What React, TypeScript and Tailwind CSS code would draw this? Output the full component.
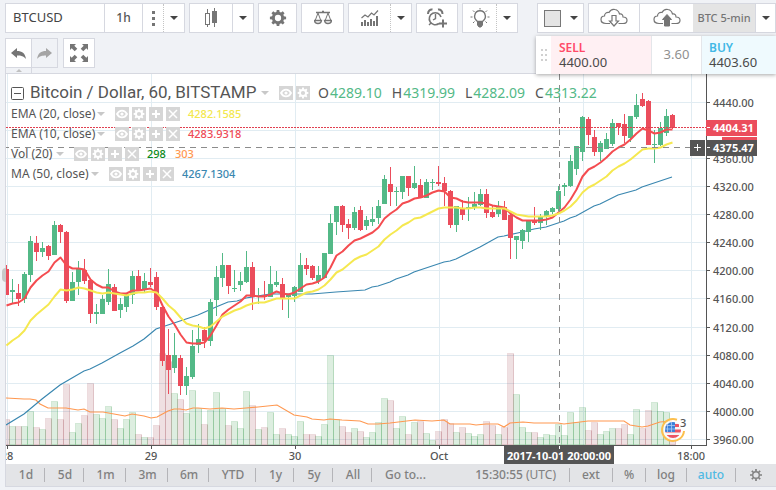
import type { ReactNode } from "react";

type Candle = [high: number, top: number, bottom: number, low: number, up: 0 | 1, volume: number];

// one row per hour: wick and body in chart pixels, direction, volume bar height
const CANDLES: Candle[] = [
  [265, 269, 295, 295, 0, 25], [279, 290, 292, 303, 1, 18], [284, 293, 299, 306, 0, 18],
  [272, 274, 299, 303, 1, 18], [236, 241, 275, 282, 1, 33], [236, 243, 252, 261, 0, 17],
  [242, 248, 252, 257, 1, 15], [245, 246, 256, 260, 0, 26], [221, 225, 255, 255, 1, 43],
  [224, 225, 232, 243, 0, 25], [231, 232, 301, 303, 0, 60], [272, 282, 301, 301, 1, 12],
  [261, 269, 282, 295, 1, 21], [259, 270, 281, 284, 0, 29], [280, 280, 314, 323, 0, 61],
  [304, 312, 314, 324, 1, 30], [295, 299, 314, 314, 1, 26], [269, 284, 302, 305, 1, 38],
  [284, 287, 311, 311, 0, 25], [298, 304, 310, 318, 1, 16], [293, 294, 307, 312, 1, 25],
  [271, 276, 295, 304, 1, 32], [270, 276, 290, 291, 0, 10], [273, 281, 290, 292, 1, 7],
  [268, 282, 285, 287, 0, 7], [272, 277, 307, 310, 0, 19], [304, 307, 361, 366, 0, 91],
  [329, 355, 370, 394, 0, 83], [333, 355, 368, 373, 1, 51], [355, 358, 386, 395, 0, 45],
  [367, 376, 386, 395, 1, 31], [330, 346, 377, 379, 1, 54], [324, 339, 345, 353, 1, 36],
  [327, 330, 341, 348, 0, 20], [299, 302, 341, 346, 1, 34], [266, 277, 300, 316, 1, 52],
  [253, 265, 278, 287, 1, 36], [265, 265, 286, 294, 0, 19], [270, 288, 289, 292, 1, 23],
  [272, 281, 285, 291, 1, 16], [251, 267, 282, 283, 1, 53], [262, 267, 297, 310, 0, 39],
  [288, 296, 297, 304, 1, 15], [281, 295, 297, 300, 0, 17], [266, 284, 297, 297, 1, 32],
  [271, 282, 285, 287, 1, 10], [278, 284, 299, 310, 0, 16], [294, 295, 297, 318, 1, 10],
  [286, 287, 296, 302, 1, 8], [253, 265, 292, 292, 1, 23], [258, 265, 269, 275, 0, 10],
  [265, 266, 278, 280, 0, 10], [266, 275, 281, 284, 1, 8], [253, 253, 278, 278, 1, 20],
  [214, 223, 254, 254, 1, 89], [206, 206, 222, 235, 1, 25], [205, 206, 225, 232, 0, 18],
  [219, 224, 228, 239, 0, 12], [207, 212, 228, 230, 1, 16], [206, 210, 230, 231, 0, 13],
  [216, 220, 226, 230, 1, 7], [207, 219, 222, 226, 1, 12], [200, 206, 218, 224, 1, 22],
  [175, 179, 204, 204, 1, 46], [167, 184, 192, 206, 0, 44], [187, 191, 192, 206, 1, 16],
  [176, 176, 192, 199, 1, 28], [176, 176, 188, 196, 0, 10], [166, 183, 188, 189, 1, 22],
  [179, 185, 198, 198, 0, 23], [179, 182, 198, 198, 1, 11], [179, 182, 183, 190, 1, 4],
  [166, 182, 184, 186, 0, 13], [177, 183, 191, 206, 0, 25], [190, 191, 225, 228, 0, 21],
  [206, 206, 225, 232, 1, 12], [200, 209, 215, 220, 0, 17], [197, 207, 208, 221, 1, 11],
  [192, 204, 208, 210, 1, 8], [189, 194, 205, 206, 1, 10], [189, 194, 213, 218, 0, 23],
  [206, 212, 217, 218, 0, 19], [201, 207, 214, 217, 1, 10], [201, 207, 220, 220, 0, 17],
  [214, 215, 238, 259, 0, 91], [236, 236, 240, 259, 1, 50], [229, 230, 241, 249, 1, 17],
  [221, 221, 232, 242, 1, 12], [207, 220, 223, 225, 0, 12], [214, 217, 223, 230, 1, 7],
  [210, 211, 216, 225, 1, 10], [207, 208, 212, 214, 1, 9], [186, 191, 209, 211, 1, 20],
  [183, 185, 187, 196, 1, 9], [155, 161, 186, 187, 1, 32], [146, 146, 169, 175, 1, 22],
  [116, 117, 152, 161, 1, 37], [117, 119, 135, 145, 0, 14], [130, 137, 152, 156, 0, 22],
  [141, 143, 152, 161, 1, 10], [133, 139, 149, 149, 1, 13], [119, 123, 144, 146, 1, 16],
  [123, 123, 127, 135, 0, 16], [114, 124, 136, 143, 0, 20], [116, 116, 138, 142, 1, 10],
  [94, 105, 117, 119, 1, 35], [93, 99, 106, 107, 0, 16], [100, 101, 145, 145, 0, 34],
  [130, 144, 145, 163, 1, 42], [122, 128, 145, 146, 1, 33], [109, 116, 133, 136, 1, 32],
  [114, 115, 128, 129, 0, 21],
];

const EMA10 = [
  305, 303, 302, 298, 287, 280, 275, 271, 262, 257, 265, 268, 268, 269, 279, 284, 287, 287, 291, 293,
  293, 290, 290, 289, 288, 292, 305, 316, 324, 334, 342, 343, 343, 342, 335, 325, 314, 309, 305, 301,
  295, 295, 296, 296, 294, 291, 293, 294, 292, 288, 284, 283, 281, 277, 267, 255, 251, 245, 240, 238,
  235, 232, 227, 218, 213, 209, 203, 201, 198, 197, 195, 192, 190, 191, 197, 198, 201, 202, 202, 202,
  203, 205, 206, 207, 213, 217, 220, 220, 220, 220, 219, 217, 212, 207, 199, 189, 176, 169, 166, 162,
  157, 151, 147, 144, 139, 133, 128, 130, 133, 132, 129, 129,
];

const EMA20 = [
  345, 340, 336, 330, 320, 314, 309, 304, 296, 289, 290, 289, 287, 288, 290, 292, 293, 292, 293, 294,
  295, 293, 292, 292, 291, 292, 298, 305, 310, 317, 323, 325, 326, 328, 326, 321, 316, 313, 310, 308,
  305, 303, 302, 302, 300, 298, 298, 298, 298, 295, 292, 291, 289, 285, 279, 272, 269, 264, 259, 256,
  254, 250, 246, 239, 234, 230, 225, 222, 218, 217, 214, 211, 208, 207, 207, 207, 208, 208, 207, 207,
  208, 208, 208, 208, 211, 214, 215, 216, 216, 216, 216, 215, 213, 210, 206, 200, 192, 187, 184, 180,
  176, 170, 166, 163, 159, 154, 149, 148, 148, 147, 144, 142,
];

const MA50 =
  "6,425 24,414 42,399 60,385 72,378 84,371 90,369 102,363 120,353 133,346 144,339 156,329 168,325 174,323 186,319 198,315 216,307 228,302 237,301 246,298 270,294 312,294 336,292 365,290 372,287 378,286 390,282 396,279 408,275 414,272 444,262 450,261 456,259 474,250 480,247 498,237 504,236 522,232 534,229 546,227 564,221 570,218 576,216 594,206 600,204 618,195 636,190 642,187 648,185 672,177";

const VOLUME_MA =
  "6,398 24,399 30,399 36,400 40,404 48,408 66,408 78,410 84,409 90,412 103,412 125,416 132,414 144,416 151,418 157,417 168,411 174,409 180,409 186,410 193,408 198,408 210,409 222,408 234,409 246,408 258,407 277,405 294,415 307,417 312,419 324,420 330,419 342,420 360,421 368,424 378,424 390,423 415,420 432,421 444,420 450,424 470,424 476,425 486,424 498,424 504,427 510,423 523,422 534,423 558,423 564,424 588,421 624,421 630,425 642,427 648,426 660,422 672,421";

const PRICE_LABELS = [
  { label: "4440.00", y: 102 },
  { label: "", y: 130 },
  { label: "4360.00", y: 158 },
  { label: "4320.00", y: 186 },
  { label: "4280.00", y: 214 },
  { label: "4240.00", y: 242 },
  { label: "4200.00", y: 270 },
  { label: "4160.00", y: 298 },
  { label: "4120.00", y: 327 },
  { label: "4080.00", y: 355 },
  { label: "4040.00", y: 383 },
  { label: "4000.00", y: 411 },
  { label: "3960.00", y: 439 },
];

const TIME_LABELS = [
  { label: "28", x: 7 },
  { label: "29", x: 151 },
  { label: "30", x: 295 },
  { label: "Oct", x: 439 },
  { label: "", x: 583 },
  { label: "18:00", x: 691 },
];

const candleX = (i: number) => 6 + i * 6;
const toPoints = (ys: number[]) => ys.map((y, i) => `${candleX(i) + 0.5},${y + 0.5}`).join(" ");

const GEAR =
  "M8.6 1h2.8l.4 2.3 1.6.7 1.9-1.4 2 2-1.4 1.9.7 1.6 2.4.5v2.8l-2.4.4-.7 1.6 1.4 1.9-2 2-1.9-1.4-1.6.7-.4 2.4H8.6l-.4-2.4-1.6-.7-1.9 1.4-2-2 1.4-1.9-.7-1.6L1 11.4V8.6l2.4-.5.7-1.6-1.4-1.9 2-2 1.9 1.4 1.6-.7zM10 6.500a3.5 3.5 0 1 0 0 7 3.5 3.5 0 1 0 0-7z";

function GearIcon({ className }: { className: string }) {
  return (
    <svg viewBox="0 0 20 20" className={className} fill="currentColor" fillRule="evenodd">
      <path d={GEAR} />
    </svg>
  );
}

function Caret() {
  return (
    <svg viewBox="0 0 8 4" className="w-2 h-1" fill="currentColor">
      <path d="M0 0h8L4 4z" />
    </svg>
  );
}

function Group({ children, className = "" }: { children: ReactNode; className?: string }) {
  return (
    <div className={`flex h-[30px] shrink-0 border border-[#d6d8e0] bg-white text-[#757575] ${className}`}>
      {children}
    </div>
  );
}

function ToolButton({ label, children, className }: { label: string; children: ReactNode; className: string }) {
  return (
    <button type="button" aria-label={label} className={`flex items-center justify-center shrink-0 ${className}`}>
      {children}
    </button>
  );
}

function CandlesIcon() {
  return (
    <svg viewBox="0 0 14 20" className="w-3.5 h-5" shapeRendering="crispEdges">
      <path d="M3 1v4M3 16v3M10 0v19" transform="translate(.5)" stroke="currentColor" />
      <rect x="1.5" y="5.5" width="4" height="11" fill="#fff" stroke="currentColor" />
      <rect x="8" y="3" width="5" height="12" fill="currentColor" />
    </svg>
  );
}

function ScalesIcon() {
  return (
    <svg viewBox="0 0 18 16" className="w-[18px] h-4" fill="none" stroke="currentColor">
      <path d="M2 2.5h14M8 1.5h2" strokeWidth="1.3" />
      <path d="M4 3L1 11M4 3l3 8M14 3l-3 8M14 3l3 8" />
      <path d="M.5 10.5h7c-.3 4-6.700 4-7 0zM10.5 10.5h7c-.3 4-6.700 4-7 0z" strokeWidth="1.3" />
    </svg>
  );
}

function IndicatorsIcon() {
  return (
    <svg viewBox="0 0 18 16" className="w-[18px] h-4">
      <path d="M.5 8L4 5l3 2 3.5-4L13 5l4-4.5" fill="none" stroke="currentColor" strokeWidth="1.2" />
      <path
        d="M0 12h2v4H0zM3 10h2v6H3zM6 12h2v4H6zM9 9h2v7H9zM12 11h2v5h-2zM15 6h2v10h-2z"
        fill="currentColor"
      />
    </svg>
  );
}

function AlarmIcon() {
  return (
    <svg viewBox="0 0 20 20" className="w-5 h-5" fill="none" stroke="currentColor">
      <path d="M12 15.5A6 6 0 1 1 14 9" strokeWidth="1.6" />
      <path d="M1 6c0-3 2-5 4.5-4.5M15.5 6c0-3-2-5-4.5-4.5" strokeWidth="2" />
      <path d="M8.5 6v4.5L6 12M4 15l-2 2" strokeWidth="1.4" />
      <path d="M16 11.5v8M12 15.5h8" strokeWidth="2" />
    </svg>
  );
}

function BulbIcon() {
  return (
    <svg viewBox="0 0 20 20" className="w-5 h-5" fill="none" stroke="currentColor">
      <path d="M7.5 13.5C4.5 11 4 9.5 4.8 7A5.3 5.3 0 0 1 15.2 7c.8 2.5.3 4-2.7 6.5z" strokeWidth="1.4" />
      <path d="M7.5 14h5v3L11 19H9l-1.5-2z" fill="currentColor" />
      <path d="M10 0v1.5M3 2.5L4.5 4M17 2.5L15.5 4M.5 9h2M17.5 9h2M3 15l1.5-1.5M17 15l-1.5-1.5" />
    </svg>
  );
}

function CloudIcon({ upload }: { upload?: boolean }) {
  return (
    <svg viewBox="0 0 28 20" className="w-7 h-5" stroke="currentColor" fill="none">
      <path
        d="M10 15.5H6C2.5 15.5 1 13.5 1 11.5 1 9.5 2.5 8 4.5 8 4.5 5.5 6.5 4 9 4.5c1.5-3 4-3.5 6-3 2.5.5 4 2.5 4.5 4.5 2.5-.5 3.5 1 3.5 3 3 0 4 1.5 4 3.2 0 2-1.5 3.3-4 3.3h-4.5"
        strokeWidth="1.2"
      />
      {upload ? (
        <path d="M14 6.5l4.5 5h-2V18h-5v-6.5h-2z" fill="currentColor" />
      ) : (
        <path d="M14 18l4.5-5H16V7.5h-4V13H9.5z" strokeWidth="1.2" />
      )}
    </svg>
  );
}

function UndoIcon({ className }: { className: string }) {
  return (
    <svg viewBox="0 0 15 11" className={className} fill="currentColor">
      <path d="M0 5L6 0v3c5 0 8 2 9 8-2.5-3-5-3.5-9-3.5V10z" />
    </svg>
  );
}

function FullscreenIcon() {
  return (
    <svg viewBox="0 0 18 18" className="w-[18px] h-[18px]" fill="currentColor">
      <path d="M0 0h6L4.3 1.7l3 3-2.6 2.6-3-3L0 6zM18 0v6l-1.7-1.7-3 3-2.6-2.6 3-3L12 0zM0 18v-6l1.7 1.7 3-3 2.6 2.6-3 3L6 18zM18 18h-6l1.7-1.7-3-3 2.6-2.6 3 3L18 12z" />
    </svg>
  );
}

function TopToolbar() {
  return (
    <div className="flex gap-1 pl-[5px] pt-[3px] overflow-hidden">
      <Group>
        <input
          aria-label="Symbol"
          defaultValue="BTCUSD"
          className="w-[99px] pl-[7px] text-[13px] text-[#444] border-r border-[#d6d8e0] outline-none"
        />
        <button type="button" className="w-[38px] text-xs font-medium text-[#555] border-r border-[#d6d8e0]">
          1h
        </button>
        <ToolButton label="Intervals" className="w-[21px] border-r border-dotted border-[#c4c4c4]">
          <svg viewBox="0 0 3 15" className="w-[3px] h-[15px]" fill="currentColor">
            <path d="M0 0h3v3H0zM0 6h3v3H0zM0 12h3v3H0z" />
          </svg>
        </ToolButton>
        <ToolButton label="More intervals" className="w-5 text-[#444]">
          <Caret />
        </ToolButton>
      </Group>
      <Group>
        <ToolButton label="Candles" className="w-[43px] border-r border-[#d6d8e0]">
          <CandlesIcon />
        </ToolButton>
        <ToolButton label="Chart style" className="w-5 text-[#444]">
          <Caret />
        </ToolButton>
      </Group>
      <Group>
        <ToolButton label="Settings" className="w-[37px]">
          <GearIcon className="w-[18px] h-[18px]" />
        </ToolButton>
      </Group>
      <Group>
        <ToolButton label="Compare" className="w-[41px]">
          <ScalesIcon />
        </ToolButton>
      </Group>
      <Group>
        <ToolButton label="Indicators" className="w-[42px] border-r border-dotted border-[#c4c4c4]">
          <IndicatorsIcon />
        </ToolButton>
        <ToolButton label="More indicators" className="w-5 text-[#444]">
          <Caret />
        </ToolButton>
      </Group>
      <Group>
        <ToolButton label="Add alert" className="w-10">
          <AlarmIcon />
        </ToolButton>
      </Group>
      <Group>
        <ToolButton label="Ideas" className="w-[34px] border-r border-dotted border-[#c4c4c4]">
          <BulbIcon />
        </ToolButton>
        <ToolButton label="More ideas" className="w-5 text-[#444]">
          <Caret />
        </ToolButton>
      </Group>
      <Group className="ml-[15px]">
        <button type="button" aria-label="Layout" className="flex items-center gap-[9px] w-[45px] pl-1.5 text-[#444]">
          <span className="w-[17px] h-[17px] border border-[#777] bg-[#e4e4e4]" />
          <Caret />
        </button>
      </Group>
      <Group className="grow">
        <ToolButton label="Load chart" className="w-[51px] border-r border-[#d6d8e0]">
          <CloudIcon />
        </ToolButton>
        <ToolButton label="Save chart" className="w-[53px]">
          <CloudIcon upload />
        </ToolButton>
        <button type="button" className="grow bg-[#e4e4e4] border-r border-[#d6d8e0] text-[11px] font-medium whitespace-nowrap">
          BTC 5-min
        </button>
        <ToolButton label="Saved charts" className="w-[19px] text-[#444]">
          <Caret />
        </ToolButton>
      </Group>
    </div>
  );
}

function HistoryToolbar() {
  return (
    <div className="flex gap-[5px] pl-[5px] pt-[5px]">
      <Group>
        <ToolButton label="Undo" className="w-[26px] border-r border-[#d6d8e0]">
          <UndoIcon className="w-[15px] h-[11px]" />
        </ToolButton>
        <ToolButton label="Redo" className="w-[25px] bg-[#f0f2f6] text-[#a5a5a5]">
          <UndoIcon className="w-[15px] h-[11px] -scale-x-100" />
        </ToolButton>
      </Group>
      <Group>
        <ToolButton label="Fullscreen" className="w-[30px]">
          <FullscreenIcon />
        </ToolButton>
      </Group>
    </div>
  );
}

function OrderPanel() {
  return (
    <div className="absolute right-0 top-9 z-20 flex h-[38px] w-60 bg-white shadow-[0_1px_4px_rgba(0,0,0,0.35)]">
      <div className="flex w-[15px] items-center justify-center text-[#d0d0d0]">
        <svg viewBox="0 0 6 12" className="w-1.5 h-3" fill="currentColor">
          <path d="M0 0h2v2H0zM4 0h2v2H4zM0 5h2v2H0zM4 5h2v2H4zM0 10h2v2H0zM4 10h2v2H4z" />
        </svg>
      </div>
      <button type="button" className="w-[101px] pl-2 text-left bg-[#fff0f3] border-r border-[#e4e6ea]">
        <div className="text-xs font-semibold leading-[15px] text-[#ff4a68]">SELL</div>
        <div className="text-[13px] leading-[15px] text-[#4a4a4a]">4400.00</div>
      </button>
      <div className="flex w-[49px] items-center justify-center text-[13px] text-[#909090]">3.60</div>
      <button type="button" className="grow pl-[7px] text-left bg-[#effafe] border-l border-[#e4e6ea]">
        <div className="text-xs font-semibold leading-[15px] text-[#42b8e6]">BUY</div>
        <div className="text-[13px] leading-[15px] text-[#4a4a4a]">4403.60</div>
      </button>
    </div>
  );
}

function LegendButton({ label, children }: { label: string; children: ReactNode }) {
  return (
    <button type="button" aria-label={label} className="flex w-3.5 h-3.5 items-center justify-center bg-[#d6d6d6] text-white">
      {children}
    </button>
  );
}

function LegendActions({ short }: { short?: boolean }) {
  return (
    <div className="flex gap-[3px]">
      <LegendButton label="Hide">
        <svg viewBox="0 0 12 10" className="w-3 h-2.5" fill="none" stroke="currentColor">
          <path d="M1 5c2.5-4.5 7.5-4.5 10 0-2.5 4.5-7.5 4.5-10 0z" strokeWidth="1.8" />
          <circle cx="6" cy="5" r="1.6" fill="currentColor" stroke="none" />
        </svg>
      </LegendButton>
      <LegendButton label="Format">
        <GearIcon className="w-3 h-3" />
      </LegendButton>
      {!short && (
        <>
          <LegendButton label="Add">
            <svg viewBox="0 0 8 8" className="w-2 h-2" fill="currentColor">
              <path d="M3 0h2v3h3v2H5v3H3V5H0V3h3z" />
            </svg>
          </LegendButton>
          <LegendButton label="Remove">
            <svg viewBox="0 0 10 10" className="w-2.5 h-2.5" stroke="currentColor" strokeWidth="1.5">
              <path d="M1 1l8 8M9 1L1 9" />
            </svg>
          </LegendButton>
        </>
      )}
    </div>
  );
}

function LegendRow({ name, width, children }: { name: string; width: string; children: ReactNode }) {
  return (
    <div className="flex h-5 items-center text-xs text-[#555]">
      <div className={`${width} whitespace-nowrap`}>{name}</div>
      <span className="text-[#c8c8c8]">
        <Caret />
      </span>
      <div className="ml-2.5 mr-2">
        <LegendActions />
      </div>
      <div className="flex gap-[9px] text-[11px] font-medium">{children}</div>
    </div>
  );
}

function Ohlc({ name, value }: { name: string; value: string }) {
  return (
    <div className="flex items-center">
      <span className="text-sm text-[#555]">{name}</span>
      <span className="ml-px text-sm text-[#53b987]">{value}</span>
    </div>
  );
}

function Legend() {
  return (
    <div className="absolute left-[5px] top-2">
      <div className="flex h-[22px] items-center text-[#555]">
        <svg viewBox="0 0 13 13" className="w-[13px] h-[13px] mr-1.5" fill="none" stroke="currentColor">
          <rect x=".5" y=".5" width="12" height="12" rx="1" />
          <path d="M3 6.5h7" />
        </svg>
        <div className="w-[231px] font-[Roboto,sans-serif] text-[17px] whitespace-nowrap">
          Bitcoin / Dollar, 60, BITSTAMP
        </div>
        <span className="text-[#c8c8c8] mr-2.5">
          <Caret />
        </span>
        <LegendActions short />
        <div className="ml-2 flex gap-2.5">
          <Ohlc name="O" value="4289.10" />
          <Ohlc name="H" value="4319.99" />
          <Ohlc name="L" value="4282.09" />
          <Ohlc name="C" value="4313.22" />
        </div>
      </div>
      <LegendRow name="EMA (20, close)" width="w-[86px]">
        <span className="text-[#f3e84e]">4282.1585</span>
      </LegendRow>
      <LegendRow name="EMA (10, close)" width="w-[86px]">
        <span className="text-[#ee4a55]">4283.9318</span>
      </LegendRow>
      <LegendRow name="Vol (20)" width="w-[45px]">
        <span className="text-[#0a8a1a]">298</span>
        <span className="text-[#ff9850]">303</span>
      </LegendRow>
      <LegendRow name="MA (50, close)" width="w-20">
        <span className="text-[#3a87b0]">4267.1304</span>
      </LegendRow>
    </div>
  );
}

function PriceChart() {
  return (
    <svg viewBox="6 74 770 390" className="block w-full h-auto" fontSize="11" fill="#555">
      {/* grid */}
      <g fill="#e1ecf2" shapeRendering="crispEdges">
        {PRICE_LABELS.map(({ y }) => (
          <rect key={y} x="6" y={y} width="700" height="1" />
        ))}
        {TIME_LABELS.map(({ x }) => (
          <rect key={x} x={x} y="74" width="1" height="371" />
        ))}
      </g>

      {/* volume */}
      <g shapeRendering="crispEdges">
        {CANDLES.map(([, , , , up, volume], i) => (
          <rect
            key={i}
            x={Math.max(candleX(i) - 2.5, 5.5)}
            y={444.5 - volume}
            width={i === 0 ? 4 : 6}
            height={volume}
            fill={up ? "rgba(30,140,50,0.15)" : "rgba(150,50,60,0.15)"}
            stroke={up ? "rgba(30,140,50,0.2)" : "rgba(150,50,60,0.17)"}
          />
        ))}
      </g>
      <polyline points={VOLUME_MA} fill="none" stroke="#ff9850" strokeWidth="1.2" />
      <polyline points={MA50} fill="none" stroke="#3a87b0" strokeWidth="1.2" />

      {/* candles */}
      <g shapeRendering="crispEdges">
        {CANDLES.map(([high, top, bottom, low, up], i) => (
          <g key={i} fill={up ? "#53b987" : "#eb4d5c"}>
            <rect x={candleX(i)} y={high} width="1" height={low - high} />
            <rect x={candleX(i) - 2} y={top} width="5" height={bottom - top} />
          </g>
        ))}
      </g>
      <polyline points={toPoints(EMA10)} fill="none" stroke="#f44c50" strokeWidth="2" strokeLinejoin="round" />
      <polyline points={toPoints(EMA20)} fill="none" stroke="#f5e850" strokeWidth="2" strokeLinejoin="round" />

      {/* last price and crosshair */}
      <g shapeRendering="crispEdges">
        <path d="M6 127.5H706" stroke="#e04050" strokeDasharray="2 1" />
        <path d="M3 147.5H690M559.5 74V445" stroke="#8c8c8c" strokeDasharray="6 5" />
      </g>

      {/* axes */}
      <g shapeRendering="crispEdges">
        <path d="M6 445.5H706.5M706.5 74V446" fill="none" stroke="#555" />
        {PRICE_LABELS.map(({ y }) => (
          <rect key={y} x="707" y={y} width="3" height="1" />
        ))}
        {TIME_LABELS.filter(({ label }) => label).map(({ x }) => (
          <rect key={x} x={x} y="446" width="1" height="3" />
        ))}
      </g>
      {PRICE_LABELS.map(({ label, y }) => (
        <text key={y} x="713" y={y + 5} fontWeight="500">
          {label}
        </text>
      ))}
      {TIME_LABELS.map(({ label, x }) => (
        <text key={x} x={x} y="460" textAnchor="middle" fontWeight="500">
          {label}
        </text>
      ))}

      {/* axis tags */}
      <g shapeRendering="crispEdges">
        <rect x="706" y="120" width="51" height="16" fill="#eb4d5c" />
        <rect x="722" y="137" width="35" height="3" fill="#eb4d5c" />
        <rect x="706" y="140" width="51" height="16" />
        <rect x="690" y="140" width="15" height="16" />
        <rect x="504" y="446" width="110" height="18" />
        <path d="M694 147.5h7M697.5 144v7M707 127.5h3M707 147.5h3M559.5 446v3" stroke="#fff" />
      </g>
      <g fill="#fff" fontWeight="700">
        <text x="713" y="132">4404.31</text>
        <text x="713" y="152">4375.47</text>
        <text x="559" y="460" textAnchor="middle">2017-10-01 20:00:00</text>
      </g>

      {/* calendar event */}
      <clipPath id="event-flag">
        <circle cx="673" cy="430" r="8" />
      </clipPath>
      <circle cx="673" cy="430" r="11" fill="#fff" fillOpacity="0.8" />
      <path d="M677 419.8a11 11 0 1 0 7 11.2" fill="none" stroke="#fcbf4d" strokeWidth="2" />
      <g clipPath="url(#event-flag)">
        <rect x="665" y="422" width="16" height="16" fill="#f6f6f6" />
        <path d="M665 424h16v3h-16zM665 429.5h16v3h-16zM665 435h16v3h-16z" fill="#ec5464" />
        <rect x="665" y="422" width="10" height="10" fill="#3c80d8" />
        <path d="M667.5 422v10M671.5 422v10M665 425.5h10M665 429h10" stroke="#a9cbf5" strokeWidth="0.8" />
      </g>
      <rect x="679" y="418" width="8" height="9" fill="#fff" />
      <text x="680" y="427" fontWeight="500">3</text>
    </svg>
  );
}

const RANGES = [
  { label: "1d", width: "w-[39px]" },
  { label: "5d", width: "w-[39px]" },
  { label: "1m", width: "w-[42px]" },
  { label: "3m", width: "w-[42px]" },
  { label: "6m", width: "w-[41px]" },
  { label: "YTD", width: "w-[47px]" },
  { label: "1y", width: "w-[38px]" },
  { label: "5y", width: "w-[39px]" },
  { label: "All", width: "w-[39px]" },
];

const OPTIONS = [
  { label: "ext", width: "w-[43px]", active: false },
  { label: "%", width: "w-[33px]", active: false },
  { label: "log", width: "w-[41px]", active: false },
  { label: "auto", width: "w-[49px]", active: true },
];

function BottomBar() {
  return (
    <div className="flex h-[23px] items-center justify-between bg-[#e3e4e7] border-b border-[#d6d8e0] text-xs font-medium text-[#808080]">
      <div className="flex">
        {RANGES.map(({ label, width }) => (
          <button key={label} type="button" className={`${width} h-3.5 pl-0.5 leading-[14px] border-r border-[#b4b4b8]`}>
            {label}
          </button>
        ))}
        <button type="button" className="h-3.5 pl-[13px] leading-[14px]">
          Go to...
        </button>
      </div>
      <div className="flex">
        <div className="h-3.5 pr-[13px] leading-[14px] border-r border-[#b4b4b8]">
          15:30:55 <span className="font-normal">(UTC)</span>
        </div>
        {OPTIONS.map(({ label, width, active }) => (
          <button
            key={label}
            type="button"
            className={`${width} h-3.5 leading-[14px] border-r border-[#b4b4b8] ${active ? "text-[#4fb9e3]" : ""}`}
          >
            {label}
          </button>
        ))}
        <button type="button" aria-label="Scale settings" className="flex w-10 h-3.5 items-center justify-center">
          <svg viewBox="0 0 12 12" className="w-3 h-3" fill="none" stroke="currentColor">
            <circle cx="6" cy="6" r="3.3" strokeWidth="1.4" />
            <path d="M6 0v2M6 10v2M0 6h2M10 6h2M1.8 1.8l1.4 1.4M8.8 8.8l1.4 1.4M1.8 10.2l1.4-1.4M8.8 3.2l1.4-1.4" strokeWidth="1.7" />
          </svg>
        </button>
      </div>
    </div>
  );
}

export default function App() {
  return (
    <div className="relative min-h-screen overflow-hidden bg-[#f0f2f6] font-['Noto_Sans',sans-serif]">
      <TopToolbar />
      <HistoryToolbar />
      <OrderPanel />

      <div className="ml-[5px] flex h-[5px] w-[27px] items-center justify-center border-x border-[#d6d8e0] text-[#c0c0c0]">
        <svg viewBox="0 0 6 3" className="w-1.5 h-[3px]" fill="currentColor">
          <path d="M0 3h6L3 0z" />
        </svg>
      </div>

      <div className="relative ml-[5px] border-l border-[#d6d8e0]">
        <div className="relative bg-white border-t border-[#d6d8e0]">
          <PriceChart />
          <Legend />
        </div>
        <BottomBar />
        <div className="absolute -left-1 top-[195px] h-3.5 w-1 rounded-l-full bg-[#c8c8c8]" />
      </div>
    </div>
  );
}
